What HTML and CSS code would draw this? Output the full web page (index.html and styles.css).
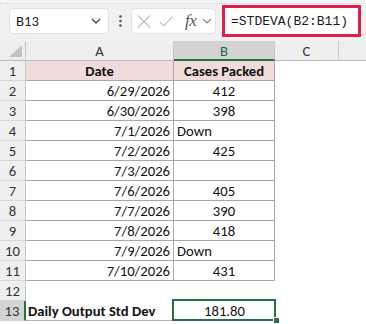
FILE: index.html
```html
<!DOCTYPE html>
<html>
<head>
<meta charset="utf-8">
<link rel="stylesheet" href="styles.css">
</head>
<body>
<div class="app">
  <div class="toolbar">
    <div class="namebox">
      <span class="name">B13</span>
      <svg class="chev" width="10" height="6" viewBox="0 0 10 6"><path d="M1 1 L5 5 L9 1" fill="none" stroke="#444" stroke-width="1.3"/></svg>
    </div>
    <div class="dots">
      <svg width="3" height="12" viewBox="0 0 3 12"><circle cx="1.5" cy="1.5" r="1.3" fill="#555"/><circle cx="1.5" cy="6" r="1.3" fill="#555"/><circle cx="1.5" cy="10.5" r="1.3" fill="#555"/></svg>
    </div>
    <div class="fxbox">
      <svg class="ic" width="14" height="13" viewBox="0 0 14 13"><path d="M1 0.5 L13 12.5 M13 0.5 L1 12.5" stroke="#bdbdbd" stroke-width="1.1" fill="none"/></svg>
      <svg class="ic ok" width="14" height="11" viewBox="0 0 14 11"><path d="M0.7 5.8 L4.8 10 L13.3 0.7" stroke="#bdbdbd" stroke-width="1.1" fill="none"/></svg>
      <span class="fx">fx</span>
      <svg class="chev2" width="10" height="6" viewBox="0 0 10 6"><path d="M1 1 L5 5 L9 1" fill="none" stroke="#888" stroke-width="1.1"/></svg>
    </div>
    <div class="formula">=STDEVA(B2:B11)</div>
  </div>
  <div class="sheet">
    <div class="corner"><svg width="13" height="12" viewBox="0 0 13 12"><path d="M13 0 L13 12 L0 12 Z" fill="#c4c4c4"/></svg></div>
    <div class="ch">A</div>
    <div class="ch selc">B</div>
    <div class="ch">C</div>
    <div class="ch last"></div>

    <div class="rh">1</div><div class="c b hd">Date</div><div class="c b hd">Cases Packed</div><div class="c"></div><div class="c"></div>
    <div class="rh">2</div><div class="c b r">6/29/2026</div><div class="c b m">412</div><div class="c"></div><div class="c"></div>
    <div class="rh">3</div><div class="c b r">6/30/2026</div><div class="c b m">398</div><div class="c"></div><div class="c"></div>
    <div class="rh">4</div><div class="c b r">7/1/2026</div><div class="c b l">Down</div><div class="c"></div><div class="c"></div>
    <div class="rh">5</div><div class="c b r">7/2/2026</div><div class="c b m">425</div><div class="c"></div><div class="c"></div>
    <div class="rh">6</div><div class="c b r">7/3/2026</div><div class="c b m"></div><div class="c"></div><div class="c"></div>
    <div class="rh">7</div><div class="c b r">7/6/2026</div><div class="c b m">405</div><div class="c"></div><div class="c"></div>
    <div class="rh">8</div><div class="c b r">7/7/2026</div><div class="c b m">390</div><div class="c"></div><div class="c"></div>
    <div class="rh">9</div><div class="c b r">7/8/2026</div><div class="c b m">418</div><div class="c"></div><div class="c"></div>
    <div class="rh">10</div><div class="c b r">7/9/2026</div><div class="c b l">Down</div><div class="c"></div><div class="c"></div>
    <div class="rh">11</div><div class="c b r">7/10/2026</div><div class="c b m">431</div><div class="c"></div><div class="c"></div>
    <div class="rh">12</div><div class="c"></div><div class="c"></div><div class="c"></div><div class="c"></div>
    <div class="rh selr">13</div><div class="c bb l bold">Daily Output Std Dev</div><div class="c bb m sel">181.80</div><div class="c"></div><div class="c"></div>
  </div>
</div>
</body>
</html>
```
FILE: styles.css
```css
html, body {
  margin: 0;
  padding: 0;
  background: #ffffff;
}
.app {
  width: 366px;
  height: 324px;
  overflow: hidden;
  font-family: "Carlito", "Liberation Sans", Arial, sans-serif;
  font-size: 14.67px;
  color: #111;
}
.toolbar {
  height: 41px;
  box-sizing: border-box;
  background: #f1f1f1;
  border-top: 4px solid #f6f6f6;
  display: flex;
  align-items: center;
  position: relative;
}
.toolbar::before {
  content: "";
  position: absolute;
  left: 0;
  right: 0;
  top: -1px;
  border-top: 1px dotted #d4d4d4;
}
.namebox {
  margin-left: 9px;
  margin-top: -3px;
  width: 100px;
  height: 26px;
  box-sizing: border-box;
  background: #fff;
  border: 1px solid #e2e2e2;
  border-radius: 4px;
  display: flex;
  align-items: center;
  justify-content: space-between;
  padding: 0 7px 0 6px;
}
.name {
  font-size: 14.67px;
  color: #222;
}
.dots {
  width: 22px;
  margin-top: -3px;
  display: flex;
  justify-content: center;
}
.fxbox {
  width: 85px;
  height: 26px;
  margin-top: -3px;
  box-sizing: border-box;
  background: #fff;
  border: 1px solid #e4e4e4;
  border-radius: 4px;
  display: flex;
  align-items: center;
  padding-left: 5px;
}
.ic { margin-right: 8px; }
.ok { margin-right: 12px; }
.fx {
  font-family: "Liberation Serif", "Times New Roman", serif;
  font-style: italic;
  font-size: 17px;
  color: #555;
  margin-right: 6px;
  letter-spacing: -0.5px;
}
.formula {
  margin-left: 6px;
  margin-top: -3px;
  width: 139px;
  height: 32px;
  box-sizing: border-box;
  border: 3px solid #e21d4b;
  background: #fff;
  padding-left: 6px;
  display: flex;
  align-items: center;
  font-family: "Liberation Mono", "DejaVu Sans Mono", monospace;
  font-size: 13px;
  color: #1a1a1a;
}
.sheet {
  display: grid;
  grid-template-columns: 26px 148px 101px 64px 1fr;
  grid-auto-rows: 20px;
}
.sheet > div {
  box-sizing: border-box;
  line-height: 20px;
  white-space: nowrap;
  overflow: hidden;
}
.corner {
  background: #efefef;
  border-right: 1px solid #c9c9c9;
  border-bottom: 1px solid #bcbcbc;
  display: flex;
  align-items: flex-end;
  justify-content: flex-end;
  padding: 0 3px 3px 0;
}
.corner svg { display: block; }
.ch {
  background: #efefef;
  border-right: 1px solid #c9c9c9;
  border-bottom: 1px solid #bcbcbc;
  text-align: center;
  color: #333;
}
.ch.last { border-right: none; }
.ch.selc {
  background: #d3d3d3;
  color: #1c6b3e;
  border-bottom: 2px solid #217346;
}
.rh {
  background: #efefef;
  border-right: 1px solid #c6c6c6;
  border-bottom: 1px solid #d6d6d6;
  text-align: center;
  color: #333;
}
.rh.selr {
  background: #d3d3d3;
  border-right: 2px solid #217346;
}
.c {
  background: #fff;
}
.b {
  border-right: 1px solid #a8a8a8;
  border-bottom: 1px solid #a8a8a8;
}
.bb {
  border-bottom: 1px solid #b4b4b4;
}
.hd {
  background: #f2dcdb;
  font-weight: bold;
  text-align: center;
}
.r { text-align: right; padding-right: 3px; }
.m { text-align: center; }
.l { text-align: left; padding-left: 3px; }
.bold { font-weight: bold; padding-left: 2px; }
.sheet > .sel {
  position: relative;
  overflow: visible;
}
.sel::after {
  content: "";
  position: absolute;
  left: -2px;
  top: -2px;
  width: 104px;
  height: 22px;
  box-sizing: border-box;
  border: 2px solid #217346;
}
.sel::before {
  content: "";
  position: absolute;
  right: -4px;
  bottom: -3px;
  width: 5px;
  height: 5px;
  background: #217346;
  border-left: 1px solid #fff;
  border-top: 1px solid #fff;
  z-index: 1;
}
```
